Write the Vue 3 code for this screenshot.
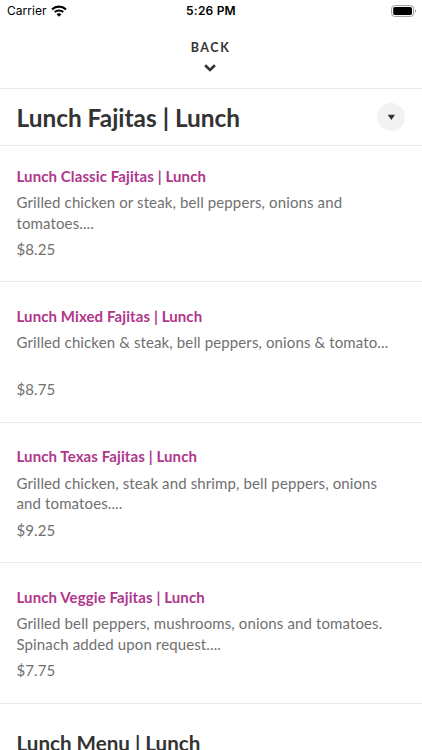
<template>
  <div class="screen">
    <!-- status bar -->
    <div class="status-bar">
      <div class="status-left">
        <span class="carrier">Carrier</span>
        <svg class="wifi" width="16" height="12" viewBox="0 0 16 12">
          <path d="M1.1 4.4C5 0.7 11 0.7 14.9 4.4" fill="none" stroke="#000" stroke-width="2.3" />
          <path d="M3.7 7.1C6.1 4.9 9.9 4.9 12.3 7.1" fill="none" stroke="#000" stroke-width="2" />
          <path d="M8 11.7L5.6 9.2C7 8 9 8 10.4 9.2Z" fill="#000" />
        </svg>
      </div>
      <div class="time">5:26 PM</div>
      <div class="status-right">
        <svg width="26" height="12" viewBox="0 0 26 12">
          <rect x="0.6" y="0.6" width="22" height="10.8" rx="3" fill="none" stroke="#999" />
          <rect x="2.2" y="2.1" width="18.8" height="7.8" rx="1.6" fill="#000" />
          <path d="M24 4.2C25.2 4.6 25.2 7.4 24 7.8Z" fill="#888" />
        </svg>
      </div>
    </div>

    <!-- back -->
    <button class="back" @click="goBack">
      <span class="back-label">BACK</span>
      <svg width="13" height="8" viewBox="0 0 13 8">
        <path d="M1.1 1.2L6 5.9L10.9 1.2" fill="none" stroke="#333" stroke-width="2.6" />
      </svg>
    </button>

    <!-- section header -->
    <div class="section-header">
      <h1 class="section-title">Lunch Fajitas | Lunch</h1>
      <button class="toggle">
        <svg width="8" height="6" viewBox="0 0 8 6">
          <path d="M0.7 0.7H8L4.4 5.9Z" fill="#333" />
        </svg>
      </button>
    </div>

    <!-- menu items -->
    <div v-for="item in items" :key="item.id" class="item">
      <h2 class="item-name">{{ item.name }}</h2>
      <div class="item-desc">
        <div v-for="line in item.lines" :key="line">{{ line }}</div>
      </div>
      <div class="item-price">${{ item.price }}</div>
    </div>

    <h1 class="next-title">Lunch Menu | Lunch</h1>
  </div>
</template>

<script setup>
import { ref } from 'vue';

const items = ref([
  {
    id: 1,
    name: 'Lunch Classic Fajitas | Lunch',
    lines: ['Grilled chicken or steak, bell peppers, onions and', 'tomatoes....'],
    price: '8.25'
  },
  {
    id: 2,
    name: 'Lunch Mixed Fajitas | Lunch',
    lines: ['Grilled chicken & steak, bell peppers, onions & tomato...'],
    price: '8.75'
  },
  {
    id: 3,
    name: 'Lunch Texas Fajitas | Lunch',
    lines: ['Grilled chicken, steak and shrimp, bell peppers, onions', 'and tomatoes....'],
    price: '9.25'
  },
  {
    id: 4,
    name: 'Lunch Veggie Fajitas | Lunch',
    lines: ['Grilled bell peppers, mushrooms, onions and tomatoes.', 'Spinach added upon request....'],
    price: '7.75'
  }
]);

const goBack = () => {
  window.history.back();
};
</script>

<style>
body {
  background-color: #fff;
  overflow: hidden;
}
</style>

<style scoped>
.screen {
  height: 750px;
  overflow: hidden;
  background-color: #fff;
  font-family: Lato, sans-serif;
  color: #333;
}

h1,
h2 {
  margin: 0;
}

button {
  border: none;
  padding: 0;
  font-family: inherit;
  color: inherit;
  cursor: pointer;
}

.status-bar {
  display: grid;
  grid-template-columns: 1fr auto 1fr;
  align-items: center;
  height: 21px;
  padding: 0 5px;
  font-family: Inter, sans-serif;
  color: #000;
}

.status-left {
  display: flex;
  align-items: center;
  gap: 4px;
  padding-left: 2px;
}

.carrier {
  font-size: 12px;
  letter-spacing: 0.05px;
}

.time {
  font-size: 12px;
  font-weight: 600;
  letter-spacing: 0.2px;
}

.status-right {
  display: flex;
  justify-content: flex-end;
}

.back {
  display: flex;
  flex-direction: column;
  align-items: center;
  width: 421px;
  height: 67px;
  padding-top: 19px;
  background: none;
}

.back-label {
  font-size: 12.5px;
  font-weight: 700;
  line-height: 16px;
  letter-spacing: 1.6px;
  margin-bottom: 7.5px;
}

.section-header {
  display: flex;
  align-items: center;
  justify-content: space-between;
  box-sizing: border-box;
  height: 58px;
  padding: 0 17px 0 16.5px;
  border-top: 1px solid #ebebeb;
  border-bottom: 1px solid #ebebeb;
}

.section-title {
  font-size: 24.4px;
  font-weight: 700;
}

.toggle {
  display: flex;
  align-items: center;
  justify-content: center;
  width: 28px;
  height: 28px;
  border-radius: 50%;
  background-color: #f2f2f2;
}

.item {
  box-sizing: border-box;
  height: 140.5px;
  padding: 23.8px 16.5px 0;
  border-bottom: 1px solid #ebebeb;
}

.section-header + .item {
  height: 136px;
  padding-top: 19.5px;
}

.item-name {
  font-size: 15px;
  font-weight: 700;
  line-height: 20px;
  letter-spacing: 0.1px;
  color: #b0368c;
}

.item-desc {
  height: 41px;
  margin-top: 6.5px;
  font-size: 15px;
  line-height: 20.5px;
  letter-spacing: 0.12px;
  color: #707070;
  white-space: nowrap;
}

.item-price {
  margin-top: 6px;
  font-size: 15px;
  line-height: 20px;
  letter-spacing: 0.1px;
  color: #707070;
}

.next-title {
  padding: 26px 16.5px 0;
  font-size: 20.6px;
  font-weight: 700;
  line-height: 26px;
}
</style>
